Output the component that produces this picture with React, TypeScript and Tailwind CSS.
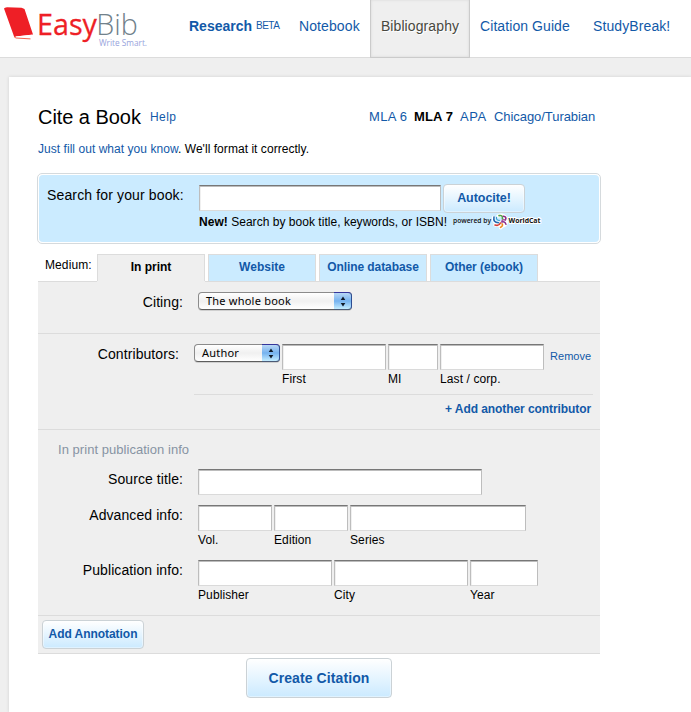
import React from "react";

const link = "text-[#1259a8]";

function Logo() {
  return (
    <svg width="150" height="52" viewBox="0 0 150 52" className="block shrink-0 overflow-visible">
      <path d="M4 8.6Q4.5 7.4 7 7.3L21.5 7.8L24.5 9L33 34.6L15.5 36.4Q13.8 36.8 14.6 38L4 8.6Z" fill="#ee1f26" />
      <path d="M16 36.4L32.3 34.7L29 37.8L16 37.6Z" fill="#fff" />
      <path d="M15.6 35.8Q13.2 37.4 16 38L30.5 38.9" fill="none" stroke="#f0503c" strokeWidth="0.9" />
      <g fontFamily="'Open Sans', sans-serif">
        <text x="37" y="34.7" fontSize="30" fontWeight="500" fill="#ee1f26" stroke="#ee1f26" strokeWidth="0.3" textLength="60" lengthAdjust="spacingAndGlyphs">Easy</text>
        <text x="96.3" y="34.7" fontSize="30" fontWeight="300" fill="#71818b" textLength="41.5" lengthAdjust="spacingAndGlyphs">Bib</text>
        <text x="99" y="45.7" fontSize="9.4" fontWeight="400" fill="#97a3dc" textLength="48" lengthAdjust="spacingAndGlyphs">Write Smart.</text>
      </g>
    </svg>
  );
}

function WorldCat() {
  return (
    <svg width="92" height="16" viewBox="0 0 92 16" className="ml-[5px] mt-px block shrink-0 overflow-visible">
      <g fontFamily="'Open Sans', sans-serif" fontWeight="600" fill="#111">
        <text x="0" y="8.9" fontSize="7" textLength="38" lengthAdjust="spacingAndGlyphs">powered by</text>
        <text x="55.5" y="9.4" fontSize="7" fontWeight="700" stroke="#fff" strokeWidth="1.8" paintOrder="stroke" textLength="32" lengthAdjust="spacingAndGlyphs">WorldCat</text>
      </g>
      <g fill="none" strokeWidth="1.6" strokeLinecap="round">
        <path d="M40.5 3.5Q40 9 45 9" stroke="#fff" strokeWidth="3.4" />
        <path d="M45 2Q50 0 53 4M53 6Q54.5 10 50 12M42 11Q46 12.3 48 9M49 9.2Q51 11 47.5 13.8" stroke="#fff" strokeWidth="3.4" />
        <path d="M41 3Q39.8 8.5 45.5 8.7" stroke="#2869b0" />
        <path d="M43.6 3.2Q42.8 6.2 46.3 6.4" stroke="#2f9ed0" strokeWidth="1.1" />
        <path d="M46 1.6Q50 .7 49.4 5" stroke="#51a447" />
        <path d="M50.3 2.2Q54 2.8 52.4 6" stroke="#8b2a87" />
        <path d="M52.2 6Q50.3 5 48.7 7" stroke="#b23b8e" strokeWidth="1.1" />
        <path d="M48.8 8Q52 7 53 10.4" stroke="#8b2a87" strokeWidth="1.4" />
        <path d="M42 11Q46 12.3 47.4 9" stroke="#d53c35" />
        <path d="M49 9.8Q50.6 11.4 47.5 13.4" stroke="#ee8c20" />
      </g>
    </svg>
  );
}

function Field({ width, caption }: { width: string; caption?: string }) {
  return (
    <div className={`${width} shrink-0`}>
      <input
        aria-label={caption || "Text"}
        className="block h-[26px] w-full border border-x-[#bdbdbd] border-t-[#777777] border-b-[#dadada] bg-white shadow-[inset_0_1px_0_#bcbcbc,inset_1px_0_0_#f0f0f0] outline-none"
      />
      {caption && <div className="mt-px h-4 whitespace-nowrap text-[12px] leading-4 tracking-[0.1px]">{caption}</div>}
    </div>
  );
}

function Popup({ width, children }: { width: string; children: React.ReactNode }) {
  return (
    <button
      className={`${width} flex h-[18px] shrink-0 rounded-[4px] border border-[#8b8b8b] border-b-[#5d5d5d] bg-linear-to-b from-white via-[#f0f0f0] to-white text-left shadow-[0_1px_0_#cfcfcf]`}
    >
      <span className="flex-1 whitespace-nowrap pl-[7px] font-['Noto_Sans',sans-serif] text-[11px] leading-[16px] tracking-[0.22px]">
        {children}
      </span>
      <span className="-mt-px -mr-px flex h-[18px] w-[18px] items-center justify-center rounded-r-[4px] border border-l-0 border-t-[#35359b] border-r-[#2d4d92] border-b-[#4b5a76] bg-linear-to-b from-[#b8d7f5] via-[#75b2ef] to-[#c4edff]">
        <svg width="6" height="11" viewBox="0 0 6 11">
          <path d="M3 0.5L5.3 4H.7ZM3 10.5L.7 7H5.3Z" fill="#101a28" />
        </svg>
      </span>
    </button>
  );
}

function Label({ children }: { children: React.ReactNode }) {
  return (
    <div className="mr-[15px] w-[145px] shrink-0 whitespace-nowrap text-right text-[14px] leading-5 tracking-[0.08px]">
      {children}
    </div>
  );
}

const gradientButton =
  "shrink-0 whitespace-nowrap rounded-[4px] border border-[#cbd2d6] bg-linear-to-b from-white to-[#cbeaff] text-center font-bold text-[#1259a8] shadow-[inset_0_0_0_1px_rgba(255,255,255,0.4)]";

const tab = "h-[27px] w-[108px] shrink-0 whitespace-nowrap border border-b-0 border-[#dcdcdc] text-center text-[12px] font-bold leading-[25px]";

export default function App() {
  return (
    <div className="h-[712px] w-[691px] overflow-hidden bg-[#efefef] font-['Liberation_Sans',Arial,sans-serif] text-black">
      <header className="flex h-[58px] border-b border-[#dcdcdc] bg-white text-[14px]">
        <Logo />
        <nav className={`flex ${link} whitespace-nowrap leading-[18px]`}>
          <a className="ml-[39px] mt-[17px] w-[67px] font-bold">Research</a>
          <a className="mt-[17px] w-[43px] text-[10px] leading-[18px] tracking-[-0.5px]">BETA</a>
          <a className="mt-[17px] w-[71px] tracking-[0.1px]">Notebook</a>
          <a className="h-[58px] w-[100px] border border-t-0 border-[#cbcbcb] bg-[#efefef] pt-[17px] text-center tracking-[0.1px] text-[#484840] shadow-[inset_0_0_3px_#d8d8d8] [text-shadow:1px_1px_0_#fff]">
            Bibliography
          </a>
          <a className="ml-[10px] mt-[17px] w-[113px] tracking-[0.08px]">Citation Guide</a>
          <a className="mt-[17px] tracking-[0.1px]">StudyBreak!</a>
        </nav>
      </header>

      <main className="ml-[9px] mt-[19px] h-[635px] bg-white pl-[29px] shadow-[0_0_3px_#cfcfcf]">
        <div className="flex whitespace-nowrap pt-[28px]">
          <h1 className="w-[112px] text-[20px] leading-6 tracking-[-0.05px]">Cite a Book</h1>
          <a className={`w-[219px] pt-[3px] text-[12px] leading-[18px] tracking-[0.4px] ${link}`}>Help</a>
          <div className={`flex pt-[3px] text-[13px] leading-[18px] ${link}`}>
            <a className="w-[45px] tracking-[0.3px]">MLA 6</a>
            <a className="w-[46px] font-bold tracking-[0.1px] text-black">MLA 7</a>
            <a className="w-[34px] tracking-[0.5px]">APA</a>
            <a className="tracking-[-0.06px]">Chicago/Turabian</a>
          </div>
        </div>
        <p className="mt-[11px] h-[18px] whitespace-nowrap text-[12px] leading-[18px] tracking-[0.045px]">
          <a className={link}>Just fill out what you know</a>. We'll format it correctly.
        </p>

        <section className="-ml-px mt-[15px] h-[71px] w-[564px] rounded-[5px] border border-[#d5dadd] bg-white p-px">
          <div className="h-full rounded-[4px] bg-[#cbebff] pt-[9px]">
            <div className="flex">
              <div className="w-[160px] whitespace-nowrap pl-[8px] pt-px text-[14px] leading-5 tracking-[0.14px]">
                Search for your book:
              </div>
              <div className="mr-[2px] pt-px">
                <Field width="w-[242px]" />
              </div>
              <button className={`${gradientButton} h-[29px] w-[82px] text-[12.5px] leading-[27px] tracking-[-0.05px]`}>Autocite!</button>
            </div>
            <div className="flex pl-[160px]">
              <p className="w-[249px] whitespace-nowrap text-[12px] leading-[18px] tracking-[0.03px]">
                <b>New!</b> Search by book title, keywords, or ISBN!
              </p>
              <WorldCat />
            </div>
          </div>
        </section>

        <div className="mt-[10px] flex h-[27px]">
          <div className="w-[59px] whitespace-nowrap pl-[7px] pt-[2px] text-[12px] leading-[18px] tracking-[0.1px]">Medium:</div>
          <div className="flex gap-[3px]">
            <div className={`${tab} bg-[#efefef]`}>In print</div>
            <div className={`${tab} bg-[#cbebff] ${link}`}>Website</div>
            <div className={`${tab} bg-[#cbebff] ${link} tracking-[-0.08px]`}>Online database</div>
            <div className={`${tab} bg-[#cbebff] ${link} tracking-[-0.05px]`}>Other (ebook)</div>
          </div>
        </div>

        <form className="w-[562px] bg-[#efefef]" onSubmit={(e) => e.preventDefault()}>
          <div className="flex h-px">
            <div className="w-[59px] bg-[#dcdcdc]" />
            <div className="w-[108px]" />
            <div className="flex-1 bg-[#dcdcdc]" />
          </div>
          <div className="flex h-[52px] border-b border-[#dcdcdc] pt-[10px]">
            <Label>Citing:</Label>
            <Popup width="w-[154px]">The whole book</Popup>
          </div>
          <div className="h-[96px] border-b border-[#dcdcdc] pt-[10px]">
            <div className="flex">
              <div className="-ml-1">
                <Label>Contributors:</Label>
              </div>
              <Popup width="w-[86px]">Author</Popup>
              <div className="ml-[2px] flex gap-[2px]">
                <Field width="w-[104px]" caption="First" />
                <Field width="w-[50px]" caption="MI" />
                <Field width="w-[104px]" caption="Last / corp." />
              </div>
              <a className={`ml-[6px] pt-[4px] text-[11px] leading-4 tracking-[0.05px] ${link}`}>Remove</a>
            </div>
            <div className={`ml-[156px] mt-[7px] w-[399px] border-t border-[#dcdcdc] pr-[2px] pt-[6px] text-right text-[12px] font-bold leading-4 tracking-[-0.08px] ${link}`}>
              + Add another contributor
            </div>
          </div>
          <div className="h-[186px] border-b border-[#dcdcdc] pt-[11px]">
            <div className="h-[18px] pl-5 text-[13px] leading-[18px] tracking-[0.04px] text-[#8793a3]">In print publication info</div>
            <div className="mt-[10px] flex h-9">
              <Label>Source title:</Label>
              <Field width="w-[284px]" />
            </div>
            <div className="flex h-[55px]">
              <Label>Advanced info:</Label>
              <div className="flex gap-[2px]">
                <Field width="w-[74px]" caption="Vol." />
                <Field width="w-[74px]" caption="Edition" />
                <Field width="w-[176px]" caption="Series" />
              </div>
            </div>
            <div className="flex">
              <Label>Publication info:</Label>
              <div className="flex gap-[2px]">
                <Field width="w-[134px]" caption="Publisher" />
                <Field width="w-[134px]" caption="City" />
                <Field width="w-[68px]" caption="Year" />
              </div>
            </div>
          </div>
          <div className="flex h-[38px] border-b border-[#dcdcdc] pl-1 pt-1">
            <button className={`${gradientButton} h-[29px] w-[102px] text-[12px] leading-[25px] tracking-[-0.05px]`}>Add Annotation</button>
          </div>
        </form>
        <button className={`${gradientButton} ml-[208px] mt-[4px] block h-[40px] w-[146px] text-[14px] leading-[38px] tracking-[0.1px]`}>
          Create Citation
        </button>
      </main>
    </div>
  );
}
